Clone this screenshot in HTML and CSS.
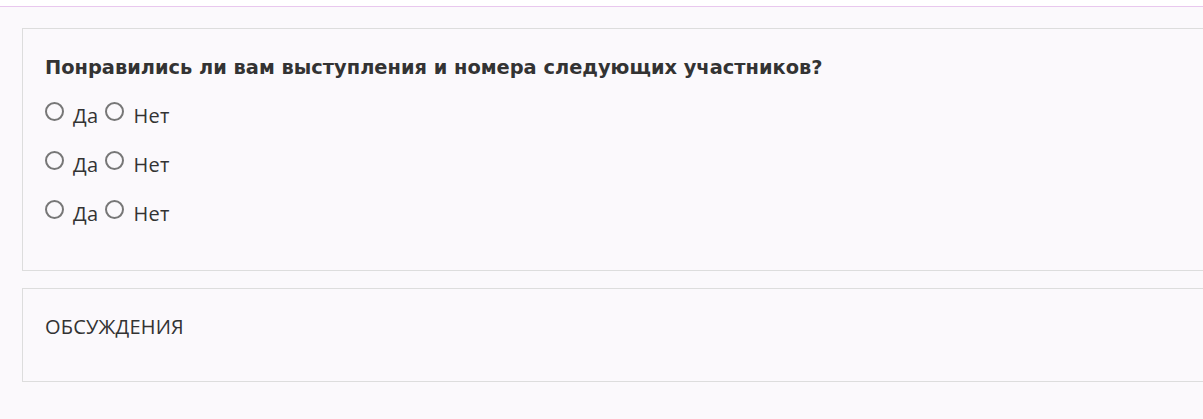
FILE: index.html
```html
<!DOCTYPE html>
<html lang="ru">
<head>
<meta charset="utf-8">
<link rel="stylesheet" href="styles.css">
</head>
<body>
<div class="topbar"></div>
<main class="page">
  <section class="card poll">
    <h2 class="poll-title">Понравились ли вам выступления и номера следующих участников?</h2>
    <div class="row">
      <label class="opt"><span class="radio"></span>Да</label>
      <label class="opt"><span class="radio"></span>Нет</label>
    </div>
    <div class="row">
      <label class="opt"><span class="radio"></span>Да</label>
      <label class="opt"><span class="radio"></span>Нет</label>
    </div>
    <div class="row">
      <label class="opt"><span class="radio"></span>Да</label>
      <label class="opt"><span class="radio"></span>Нет</label>
    </div>
  </section>
  <section class="card discuss">
    <div class="discuss-title">ОБСУЖДЕНИЯ</div>
  </section>
</main>
</body>
</html>
```

FILE: styles.css
```css
html, body {
  margin: 0;
  padding: 0;
  background: #fbf9fc;
  height: 100%;
  overflow: hidden;
}
body {
  font-family: "DejaVu Sans", sans-serif;
  color: #333;
}
.topbar {
  height: 6px;
  background: #fff;
  border-bottom: 1px solid #e9c8ee;
}
.page {
  padding: 21px 0 0 22px;
  display: flex;
  flex-direction: column;
  gap: 17px;
}
.card {
  border: 1px solid #dddddd;
  border-right: none;
  margin-right: -20px;
  background: #fbf9fc;
}
.poll {
  height: 243px;
  box-sizing: border-box;
  padding: 25px 22px 0 22px;
}
.poll-title {
  margin: 0 0 9px 0;
  font-size: 19.4px;
  font-weight: bold;
  line-height: 28px;
}
.row {
  display: flex;
  align-items: center;
  height: 49px;
}
.opt {
  display: flex;
  align-items: center;
  font-family: "Open Sans", sans-serif;
  font-size: 20px;
  letter-spacing: 0.3px;
  margin-right: 7px;
}
.radio {
  width: 15px;
  height: 15px;
  border: 2px solid #777;
  border-radius: 50%;
  margin: 0 9px 0 0;
  position: relative;
  top: -4px;
}
.discuss {
  height: 94px;
  box-sizing: border-box;
  padding: 25px 22px 0 22px;
}
.discuss-title {
  font-family: "Open Sans", sans-serif;
  font-size: 20px;
  letter-spacing: 0.2px;
  line-height: 26px;
}
```
